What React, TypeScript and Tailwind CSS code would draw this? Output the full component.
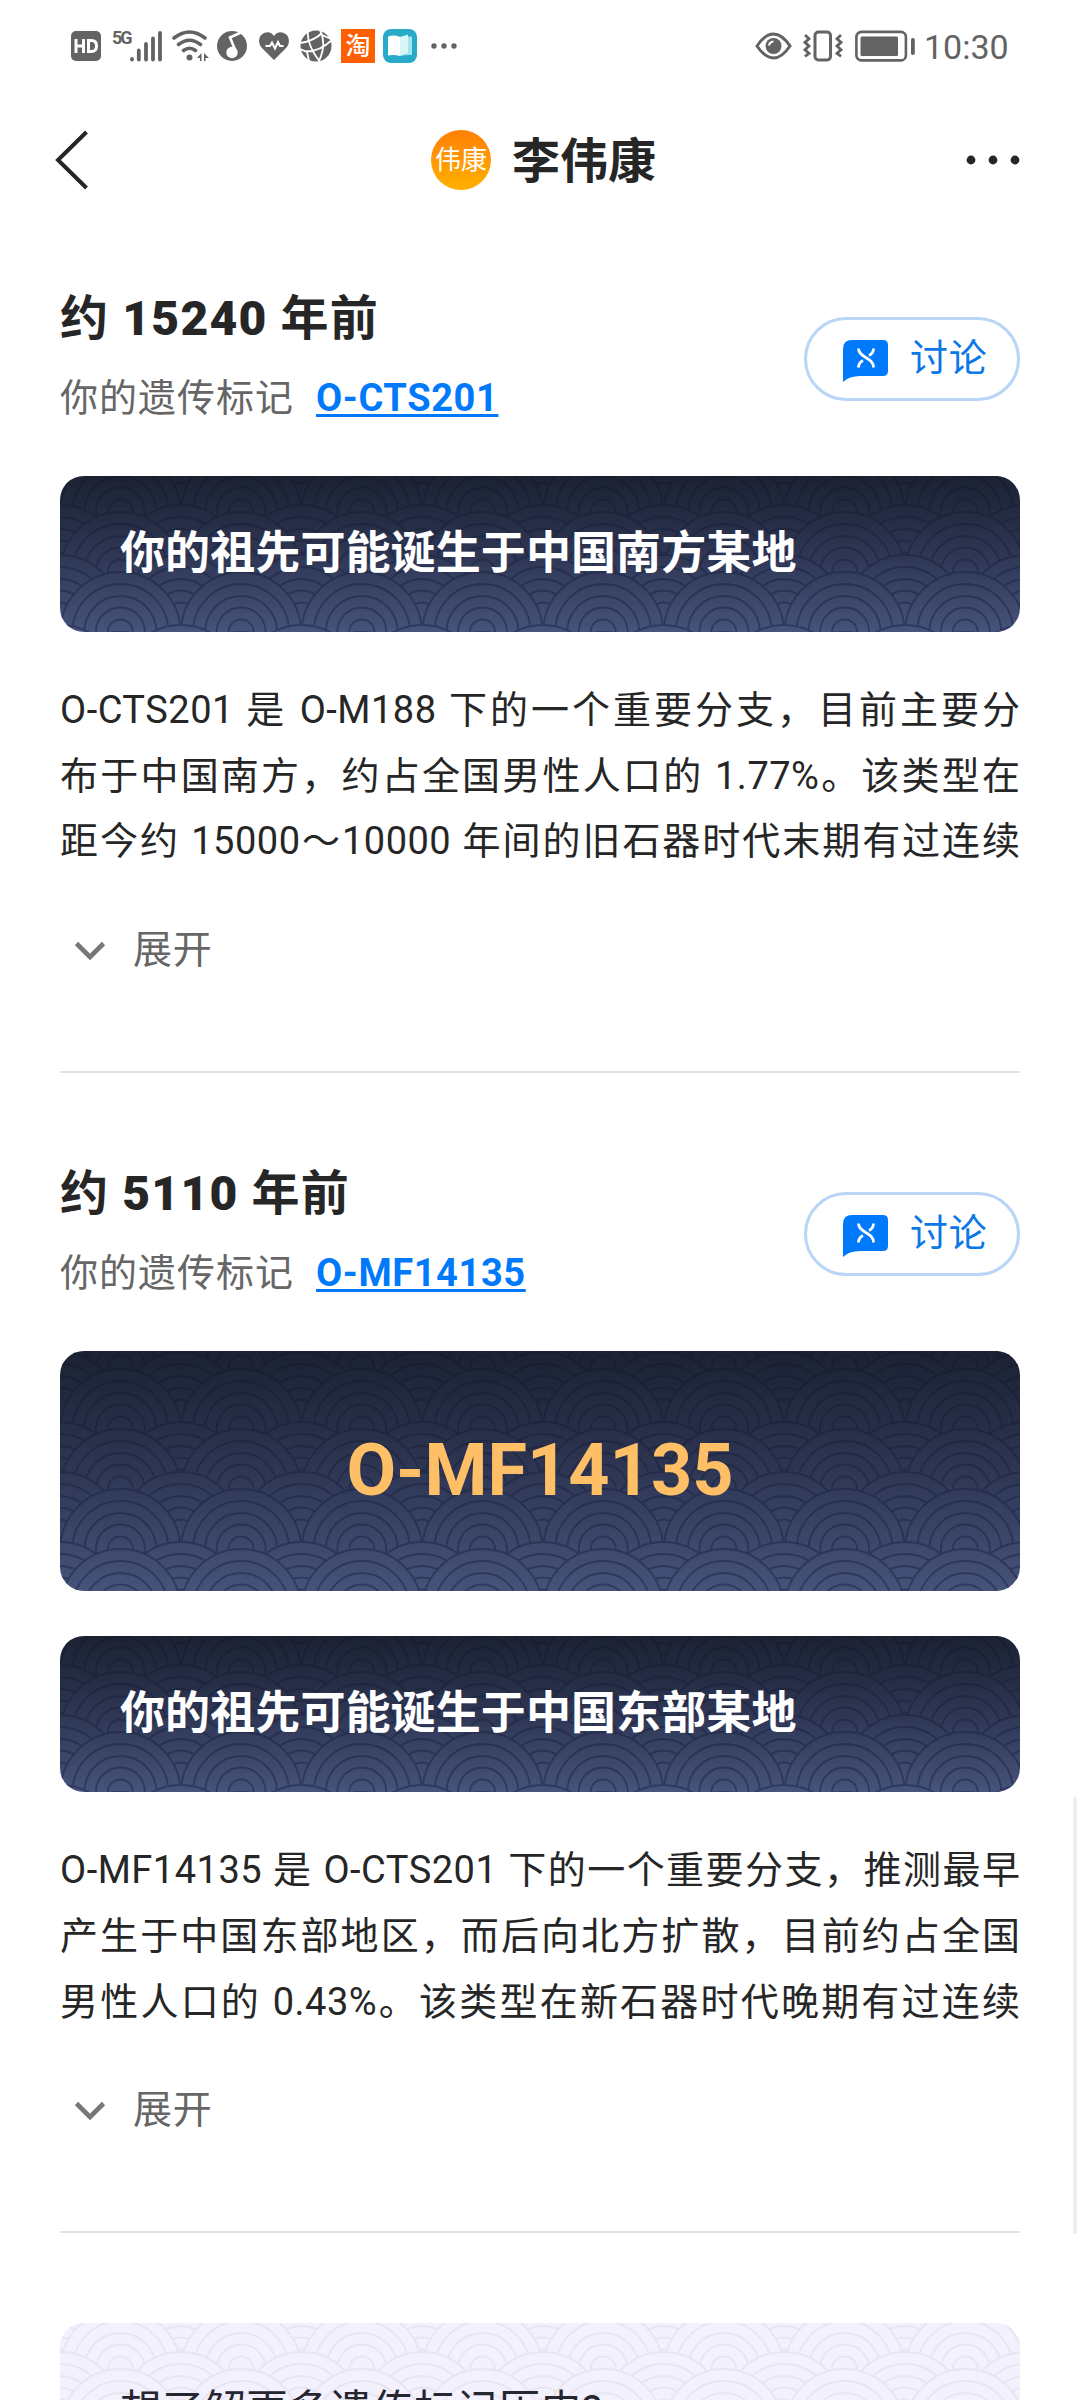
import type { ReactNode } from "react";

const sections = [
  {
    years: "15240",
    marker: "O-CTS201",
    banner: "你的祖先可能诞生于中国南方某地",
    lines: [
      "O-CTS201 是 O-M188 下的一个重要分支，目前主要分",
      "布于中国南方，约占全国男性人口的 1.77%。该类型在",
      "距今约 15000～10000 年间的旧石器时代末期有过连续",
    ],
  },
  {
    years: "5110",
    marker: "O-MF14135",
    highlight: "O-MF14135",
    banner: "你的祖先可能诞生于中国东部某地",
    lines: [
      "O-MF14135 是 O-CTS201 下的一个重要分支，推测最早",
      "产生于中国东部地区，而后向北方扩散，目前约占全国",
      "男性人口的 0.43%。该类型在新石器时代晚期有过连续",
    ],
  },
];

// Wave rows in drawing order, each row covers the one above it
const waveRows = [
  { top: -49, x: 0 },
  { top: -43, x: 60.4 },
  { top: 1, x: 0 },
  { top: 18, x: 60.4 },
  { top: 71, x: 0 },
  { top: 78, x: 60.4 },
  { top: 121, x: 0 },
  { top: 138, x: 60.4 },
  { top: 191, x: 0 },
  { top: 198, x: 60.4 },
];

type WavesProps = { id: string; height: number; shift: number; from: string; via: string; to: string };

function Waves({ id, height, shift, from, via, to }: WavesProps) {
  return (
    <svg className="absolute inset-0 h-full w-full" viewBox={`0 0 960 ${height}`} preserveAspectRatio="none">
      <defs>
        <linearGradient id={id + "-line"} x1="0" y1="0" x2="0" y2="1">
          <stop offset="0" stopColor={from} />
          <stop offset="0.5" stopColor={via} />
          <stop offset="1" stopColor={to} />
        </linearGradient>
        <mask id={id} maskUnits="userSpaceOnUse" x="0" y="0" width="960" height={height}>
          {waveRows.map((row) =>
            Array.from({ length: 9 }, (_, i) =>
              [60, 48, 36, 24.5, 12.5].map((r) => (
                <circle
                  key={`${row.top}-${i}-${r}`}
                  cx={row.x + i * 120.7}
                  cy={row.top - shift + 60}
                  r={r}
                  fill="black"
                  stroke="white"
                  strokeWidth="1.9"
                />
              ))
            )
          )}
        </mask>
      </defs>
      <rect width="960" height={height} fill={`url(#${id}-line)`} mask={`url(#${id})`} />
    </svg>
  );
}

function Banner({ id, children }: { id: string; children: ReactNode }) {
  return (
    <div className="relative flex h-[156px] items-center overflow-hidden rounded-[24px] bg-linear-to-b from-[#1b2233] via-[#2e3654] to-[#46537a] pl-[60px]">
      <Waves id={id} height={156} shift={42} from="#171d2e" via="#232b48" to="#2f3b60" />
      <span className="relative -top-px text-[45px] leading-none font-bold tracking-[0.1px] text-white">{children}</span>
    </div>
  );
}

function DiscussButton() {
  return (
    <button className="mt-[13px] flex h-[84px] w-[216px] items-center rounded-full border-[3px] border-[#b9d5f7] pl-[36px] text-[#0b78e8]">
      <svg className="mt-[4px]" width="45" height="42" viewBox="0 0 45 42">
        <path d="M9 0H40Q45 0 45 5V31Q45 36 40 36H17Q6 36 0 42V9Q0 0 9 0Z" fill="#0079fb" />
        <g fill="none" stroke="#fff" strokeWidth="2.8">
          <path d="M15.5 8.5C15.5 18 30.5 17 30.5 27.5" />
          <path d="M30.5 8.5C30.5 12 29 14 26 15.5M20 20.5C17 22 15.5 24 15.5 27.5" />
        </g>
      </svg>
      <span className="-mt-[2px] ml-[22px] text-[38px] leading-none tracking-[0.8px]">讨论</span>
    </button>
  );
}

function StatusBar() {
  return (
    <div className="flex h-[92px] items-center justify-between pr-[71px] pl-[71px] text-[#636363]">
      <div className="flex items-center">
        <svg width="30" height="30" viewBox="0 0 30 30">
          <rect width="30" height="30" rx="5" fill="#636363" />
          <g fill="none" stroke="#fff" strokeWidth="3">
            <path d="M5 8v14M12.5 8v14M5 15h8" />
            <path d="M17.5 9.5h3q5 0 5 5.500t-5 5.500h-3z" />
          </g>
        </svg>
        <span className="mt-[-17px] ml-[11px] w-[17px] font-[Roboto,sans-serif] text-[18px] leading-none font-bold tracking-[-2px]">
          5G
        </span>
        <svg className="ml-[1px]" width="32" height="32" viewBox="0 0 32 32" stroke="#636363" strokeWidth="3.8" strokeLinecap="round">
          <path d="M2 29.500v-.5M8.800 29.500v-9M16 29.500v-15.500M23 29.500V8.500M30 29.500V3" />
        </svg>
        <svg className="ml-[10px]" width="38" height="32" viewBox="0 0 38 32" fill="none" stroke="#636363" strokeWidth="3.6" strokeLinecap="round">
          <path d="M2 8Q17.500-4 33 8M6.500 14.500Q17.500 6 28.500 14.500M11.500 20.500Q17.500 16 23.500 20.500" />
          <circle cx="17.5" cy="27.5" r="3" fill="#636363" stroke="none" />
          <path d="M25 28l4.500-5v8h-1.500v-3zM32 31v-8l5 5h-3.500v3z" fill="#636363" stroke="none" />
        </svg>
        <svg className="ml-[7px]" width="30" height="30" viewBox="0 0 30 30">
          <circle cx="15" cy="15" r="15" fill="#636363" />
          <circle cx="15" cy="21.5" r="5.7" fill="#fff" />
          <path d="M19 21L13 6.500L24 1.500" fill="none" stroke="#fff" strokeWidth="2.6" />
        </svg>
        <svg className="ml-[12px]" width="30" height="28" viewBox="0 0 30 28">
          <path d="M15 28L2.500 15.500C-1 11.500-.5 5 3 2.300C7-1 12.500-.5 15 4C17.500-.5 23-1 27 2.300C30.500 5 31 11.500 27.500 15.500Z" fill="#636363" />
          <path d="M6.500 14h4.500l2-3.500 3 6 3-6.500 2 4h3.500" fill="none" stroke="#fff" strokeWidth="2" />
        </svg>
        <svg className="ml-[11px]" width="32" height="32" viewBox="0 0 32 32">
          <circle cx="16" cy="16" r="15.5" fill="#636363" />
          <g fill="none" stroke="#fff" strokeWidth="1.8">
            <path d="M8 0Q6 14 20 32M0 13Q14 11 22 3M20 0Q27 14 19 31M4 21Q18 23 32 10M0 19L7 22L9 31M20 4L31 9" />
          </g>
        </svg>
        <div className="ml-[9px] flex h-[34px] w-[34px] items-center justify-center bg-[#ff5f00] text-[25px] leading-none font-medium text-white">
          淘
        </div>
        <svg className="ml-[8px]" width="34" height="34" viewBox="0 0 34 34">
          <rect width="34" height="34" rx="8" fill="#27abc8" />
          <path d="M5 7.500Q11 5.500 17 8V27Q11 25.500 5 26.500Z" fill="#fff" />
          <path d="M17 8L25 5.500V24.500L17 27Z" fill="#d8f5f8" />
          <path d="M25 7.500H29V26Q23 25.500 17 27L25 24.500Z" fill="#a5e6ee" />
        </svg>
        <svg className="ml-[14px]" width="26" height="6" viewBox="0 0 26 6" fill="#636363">
          <circle cx="3" cy="3" r="2.7" />
          <circle cx="13" cy="3" r="2.7" />
          <circle cx="23" cy="3" r="2.7" />
        </svg>
      </div>
      <div className="flex items-center">
        <svg width="37" height="28" viewBox="0 0 37 28">
          <path d="M2 14Q10 2 18.500 2T35 14Q27 26 18.500 26T2 14Z" fill="none" stroke="#636363" strokeWidth="3" />
          <circle cx="18.5" cy="14" r="8" fill="#636363" />
          <path d="M14 13.500Q14.500 10 18.500 9.500" fill="none" stroke="#fff" strokeWidth="2" />
        </svg>
        <svg className="ml-[11px]" width="40" height="32" viewBox="0 0 40 32" fill="none" stroke="#636363" strokeWidth="3">
          <rect x="12" y="2" width="15.5" height="28" rx="3.5" />
          <path d="M2 5l4 3.700-4 3.700 4 3.700-4 3.700 4 3.500-4 3M38 5l-4 3.700 4 3.700-4 3.700 4 3.700-4 3.500 4 3" strokeWidth="2.8" />
        </svg>
        <svg className="ml-[12px]" width="60" height="32" viewBox="0 0 60 32">
          <rect x="1.400" y="1.9" width="49.5" height="28.5" rx="5" fill="none" stroke="#636363" strokeWidth="2.6" />
          <rect x="5.5" y="6.5" width="37.5" height="19.5" rx="1.5" fill="#636363" />
          <rect x="56" y="8" width="3.8" height="17" rx="1.8" fill="#636363" />
        </svg>
        <span className="mt-[2px] ml-[9px] w-[85px] text-[34px] leading-none whitespace-nowrap">10:30</span>
      </div>
    </div>
  );
}

function Header() {
  return (
    <header className="grid h-[136px] grid-cols-[1fr_auto_1fr] items-center pr-[60px] pl-[55px]">
      <svg width="34" height="60" viewBox="0 0 34 60">
        <path d="M31.500 2L3 30L31.500 58" fill="none" stroke="#262626" strokeWidth="4" />
      </svg>
      <div className="ml-[12px] flex items-center">
        <div className="flex h-[60px] w-[60px] items-center justify-center rounded-full bg-linear-to-b from-[#ff7f06] to-[#ffb000] text-[26px] leading-none text-white">
          伟康
        </div>
        <h1 className="mt-[4px] ml-[21px] text-[48px] leading-none font-bold text-[#262626]">李伟康</h1>
      </div>
      <svg className="justify-self-end" width="54" height="10" viewBox="0 0 54 10" fill="#262626">
        <circle cx="5" cy="5" r="4.4" />
        <circle cx="27" cy="5" r="4.4" />
        <circle cx="49" cy="5" r="4.4" />
      </svg>
    </header>
  );
}

export default function App() {
  return (
    <main className="relative h-[2400px] w-[1080px] overflow-hidden bg-white font-[Roboto,'Noto_Sans_CJK_SC',sans-serif] text-[#262626]">
      <StatusBar />
      <Header />

      <div className="px-[60px]">
        {sections.map((s, i) => (
          <section key={s.marker} className={i === 0 ? "pt-[60px]" : "pt-[90px]"}>
            <div className="flex h-[188px] items-start justify-between pt-[16px]">
              <div>
                <h2 className="-mt-[11px] h-[52px] text-[48px] leading-[52px] font-bold tracking-[1.2px] whitespace-nowrap">
                  约 <span className="font-black">{s.years}</span> 年前
                </h2>
                <p className="mt-[29px] flex h-[48px] items-center text-[38px] leading-[48px] tracking-[1px] whitespace-nowrap text-[#666]">
                  你的遗传标记
                  <a className="ml-[22px] font-bold tracking-[0.6px] text-[#0079fb] underline decoration-[3px] underline-offset-[3px]">
                    {s.marker}
                  </a>
                </p>
              </div>
              <DiscussButton />
            </div>

            {s.highlight && (
              <div className="relative mb-[45px] flex h-[240px] items-center justify-center overflow-hidden rounded-[24px] bg-linear-to-b from-[#1b2233] via-[#2e3654] to-[#46537a]">
                <Waves id="waves-highlight" height={240} shift={0} from="#171d2e" via="#232b48" to="#2f3b60" />
                <span className="relative text-[72px] leading-none font-bold text-[#ffbf66]">{s.highlight}</span>
              </div>
            )}
            <Banner id={`waves-${i}`}>{s.banner}</Banner>

            <div className="mt-[46px] text-[38px] leading-[65.7px] tracking-[0.5px]">
              {s.lines.map((line) => (
                <p key={line} className="-mr-[0.5px] [text-align-last:justify] whitespace-nowrap">
                  {line}
                </p>
              ))}
            </div>

            <div className="mt-[50px] flex h-[50px] items-center pl-[14px] text-[#666]">
              <svg className="mt-[2px]" width="32" height="20" viewBox="0 0 32 20">
                <path d="M2.500 2.500L16 16L29.500 2.500" fill="none" stroke="#777" strokeWidth="4.6" />
              </svg>
              <span className="ml-[27px] text-[39px] leading-none tracking-[0.8px]">展开</span>
            </div>
            <hr className="mt-[96px] border-t-2 border-[#e2e2e2]" />
          </section>
        ))}

        {/* Unlock more markers */}
        <div className="relative mt-[90px] h-[240px] overflow-hidden rounded-[24px] bg-[#f2f1fd] pt-[64px] pl-[60px]">
          <Waves id="waves-more" height={240} shift={92} from="#e7e5f0" via="#e7e5f0" to="#e7e5f0" />
          <p className="relative text-[42px] leading-[48px] text-[#262630]">想了解更多遗传标记历史?</p>
        </div>
      </div>

      <div className="absolute top-[1797px] left-[1073px] h-[437px] w-[4px] bg-[#efefef]" />
    </main>
  );
}
